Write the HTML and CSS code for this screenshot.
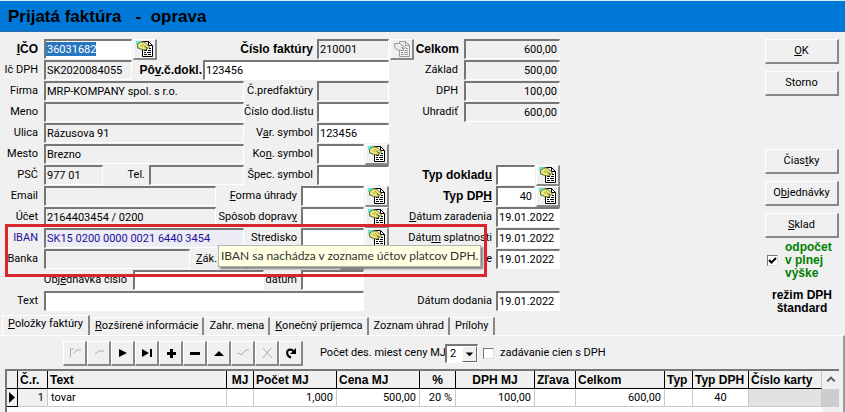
FILE: index.html
```html
<!DOCTYPE html>
<html lang="sk">
<head>
<meta charset="utf-8">
<title>Prijatá faktúra - oprava</title>
<link rel="stylesheet" href="styles.css">
</head>
<body>
<svg class="defs" aria-hidden="true">
  <symbol id="list" viewBox="0 0 18 18">
    <path d="M0 1h6v4H4v4H1V5H0z" fill="#5fe8e0"/>
    <path d="M6.500 1.500h6l4 4v11h-10z" fill="#fff" stroke="#000"/>
    <path d="M12.500 1.500v4h4" fill="none" stroke="#000"/>
    <path d="M8 10.500h3m1 0h3M8 12.500h2m1 0h4M8 14.500h3m1 0h3M13 8.500h2" stroke="#000"/>
    <path d="M1.500 4.500l3-2.500h4l5 5-1.500 1.500-3-2 2 3-2 .5-3.500-.5-4-2z" fill="#e6e67c" stroke="#66662c"/>
    <path d="M5 5l2 2M7 4l3 4" stroke="#a8a83c"/>
  </symbol>
  <symbol id="list-off" viewBox="0 0 18 18">
    <path d="M6.500 1.500h6l4 4v11h-10zM12.500 1.500v4h4" fill="none" stroke="#999"/>
    <path d="M8 10.500h3m1 0h3M8 12.500h2m1 0h4M8 14.500h3m1 0h3M13 8.500h2" stroke="#999"/>
    <path d="M1.500 3.500h5l6 4-1 1.500-3-2 2 3-2 .5-3.500-.5-3-2z" fill="#eee" stroke="#999"/>
  </symbol>
</svg>

<header class="titlebar"><h1>Prijatá faktúra&nbsp;&nbsp; -&nbsp; oprava</h1></header>

<main>
<form class="form">
  <div class="partner">
    <div class="row">
      <label class="lead strong" for="ico"><u>I</u>ČO</label><input class="w88 picked" id="ico" value="36031682">
      <button type="button" class="pick" aria-label="IČO"><svg><use href="#list"/></svg></button>
      <label class="grow strong" for="cislo">Číslo faktúry</label><input class="w72" id="cislo" value="210001" readonly>
    </div>
    <div class="row">
      <label class="lead" for="icdph">Ič DPH</label><input class="w88" id="icdph" value="SK2020084055" readonly>
      <label class="grow strong tight" for="povodne">Pô<u>v</u>.č.dokl.</label><input class="w186" id="povodne" value="123456">
    </div>
    <div class="row">
      <label class="lead" for="firma">Firma</label><input class="w200" id="firma" value="MRP-KOMPANY spol. s r.o." readonly>
      <label class="grow" for="pred">Č.predfaktúry</label><input class="w72" id="pred" readonly>
    </div>
    <div class="row">
      <label class="lead" for="meno">Meno</label><input class="w200" id="meno" readonly>
      <label class="grow" for="dodlist">Číslo dod.listu</label><input class="w72" id="dodlist">
    </div>
    <div class="row">
      <label class="lead" for="ulica">Ulica</label><input class="w200" id="ulica" value="Rázusova 91" readonly>
      <label class="grow" for="vs">V<u>a</u>r. symbol</label><input class="w72" id="vs" value="123456">
    </div>
    <div class="row">
      <label class="lead" for="mesto">Mesto</label><input class="w200" id="mesto" value="Brezno" readonly>
      <label class="grow" for="ks">Ko<u>n</u>. symbol</label><input class="w47" id="ks">
      <button type="button" class="pick" aria-label="Kon. symbol"><svg><use href="#list"/></svg></button>
    </div>
    <div class="row">
      <label class="lead" for="psc">PSČ</label><input class="w59" id="psc" value="977 01" readonly>
      <label class="tel" for="tel">Tel.</label><input class="w95" id="tel" readonly>
      <label class="grow" for="ss">Špec. symbol</label><input class="w72" id="ss">
    </div>
    <div class="row">
      <label class="lead" for="email">Email</label><input class="w172" id="email" readonly>
      <label class="grow" for="uhrada"><u>F</u>orma úhrady</label><input class="w63" id="uhrada">
      <button type="button" class="pick" aria-label="Forma úhrady"><svg><use href="#list"/></svg></button>
    </div>
    <div class="row">
      <label class="lead" for="ucet">Účet</label><input class="w172" id="ucet" value="2164403454 / 0200" readonly>
      <label class="grow" for="doprava">Spôsob doprav<u>y</u></label><input class="w63" id="doprava">
      <button type="button" class="pick" aria-label="Spôsob dopravy"><svg><use href="#list"/></svg></button>
    </div>
    <div class="row">
      <label class="lead blue" for="iban">IBAN</label><input class="w200 blue iban" id="iban" value="SK15 0200 0000 0021 6440 3454" readonly>
      <label class="grow" for="stredisko">Stredisko</label><input class="w63" id="stredisko">
      <button type="button" class="pick" aria-label="Stredisko"><svg><use href="#list"/></svg></button>
    </div>
    <div class="row short">
      <label class="lead" for="banka">Banka</label><input class="w146" id="banka" readonly>
      <label class="job" for="zakazka"><u>Z</u>ák.</label><input class="fill" id="zakazka">
      <button type="button" class="pick" aria-label="Zák."><svg><use href="#list"/></svg></button>
    </div>
    <div class="row short">
      <label class="order" for="objednavka">Obj<u>e</u>dnávka číslo</label><input class="w131" id="objednavka">
      <label class="grow" for="datum">dátum</label><input class="w63" id="datum">
    </div>
    <div class="row short">
      <label class="lead" for="text">Text</label><input class="fill" id="text">
    </div>
    <div class="highlight"></div>
    <div class="tooltip" role="tooltip">IBAN sa nachádza v zozname účtov platcov DPH.</div>
  </div>

  <div class="totals">
    <div class="row">
      <button type="button" class="pick" aria-label="Číslo faktúry" disabled><svg><use href="#list-off"/></svg></button>
      <label class="grow sum strong" for="celkom">Celkom</label><input class="w96 num" id="celkom" value="600,00" readonly>
    </div>
    <div class="row"><label class="grow sum" for="zaklad">Základ</label><input class="w96 num" id="zaklad" value="500,00" readonly></div>
    <div class="row"><label class="grow sum" for="dph">DPH</label><input class="w96 num" id="dph" value="100,00" readonly></div>
    <div class="row"><label class="grow sum" for="uhradit">Uhradiť</label><input class="w96 num" id="uhradit" value="600,00" readonly></div>
    <div class="row"></div>
    <div class="row"></div>
    <div class="row">
      <label class="grow strong" for="typdok">Typ doklad<u>u</u></label><input class="w39" id="typdok">
      <button type="button" class="pick" aria-label="Typ dokladu"><svg><use href="#list"/></svg></button>
    </div>
    <div class="row">
      <label class="grow strong" for="typdph">Typ DP<u>H</u></label><input class="w39 num" id="typdph" value="40">
      <button type="button" class="pick" aria-label="Typ DPH"><svg><use href="#list"/></svg></button>
    </div>
    <div class="row"><label class="grow" for="d1"><u>D</u>átum zaradenia</label><input class="w64" id="d1" value="19.01.2022"></div>
    <div class="row"><label class="grow" for="d2">Dátu<u>m</u> splatnosti</label><input class="w64" id="d2" value="19.01.2022"></div>
    <div class="row"><label class="grow" for="d3">e</label><input class="w64" id="d3" value="19.01.2022"></div>
    <div class="row"></div>
    <div class="row"><label class="grow" for="d4">Dátum dodania</label><input class="w64" id="d4" value="19.01.2022"></div>
  </div>

  <div class="actions">
    <button type="button" class="action"><span><u>O</u>K</span></button>
    <button type="button" class="action">Storno</button>
    <button type="button" class="action apart"><span>Čias<u>t</u>ky</span></button>
    <button type="button" class="action"><span>O<u>b</u>jednávky</span></button>
    <button type="button" class="action"><span><u>S</u>klad</span></button>
    <label class="deduct"><input type="checkbox" class="check" checked><span>odpočet<br>v plnej<br>výške</span></label>
    <p class="mode">režim DPH<br>štandard</p>
  </div>
</form>

<nav class="tabs">
  <button type="button" class="tab active"><span><u>P</u>oložky faktúry</span></button>
  <button type="button" class="tab"><span><u>R</u>ozšírené informácie</span></button>
  <button type="button" class="tab">Zahr. mena</button>
  <button type="button" class="tab"><span><u>K</u>onečný príjemca</span></button>
  <button type="button" class="tab">Zoznam úhrad</button>
  <button type="button" class="tab">Prílohy</button>
</nav>

<section class="panel">
  <div class="toolbar">
    <div class="navigator">
      <button type="button" aria-label="Prvý" disabled><svg viewBox="0 0 16 16"><path d="M3.500 12V4h3M7 8l3-3h4" fill="none" stroke="#aaa"/></svg></button>
      <button type="button" aria-label="Predchádzajúci" disabled><svg viewBox="0 0 16 16"><path d="M4 9l4-3h5" fill="none" stroke="#aaa"/></svg></button>
      <button type="button" aria-label="Nasledujúci"><svg viewBox="0 0 16 16"><path d="M4 4l8 4-8 4z"/></svg></button>
      <button type="button" aria-label="Posledný"><svg viewBox="0 0 16 16"><path d="M3 4l7 4-7 4zM11 4h2v8h-2z"/></svg></button>
      <button type="button" aria-label="Pridať"><svg viewBox="0 0 16 16"><path d="M7 4h3v3h3v3h-3v3H7v-3H4V7h3z"/></svg></button>
      <button type="button" aria-label="Odobrať"><svg viewBox="0 0 16 16"><path d="M3 7h10v3H3z"/></svg></button>
      <button type="button" aria-label="Upraviť"><svg viewBox="0 0 16 16"><path d="M3 11l5-5 5 5z"/></svg></button>
      <button type="button" aria-label="Potvrdiť" disabled><svg viewBox="0 0 16 16"><path d="M2 9l2-1 2 2 5-5h3" fill="none" stroke="#aaa"/></svg></button>
      <button type="button" aria-label="Zrušiť" disabled><svg viewBox="0 0 16 16"><path d="M4 3l9 10M12 3L4 13" fill="none" stroke="#aaa"/></svg></button>
      <button type="button" aria-label="Obnoviť"><svg viewBox="0 0 16 16"><path d="M8 12.500C3 11 3 5 7 4.500c2 0 3.500 1 4 3" fill="none" stroke="#000" stroke-width="2"/><path d="M13 3v6H7z"/></svg></button>
    </div>
    <label class="places" for="places">Počet des. miest ceny MJ</label>
    <span class="combo">
      <select id="places"><option>2</option></select>
      <svg class="arrow" viewBox="0 0 14 15"><path d="M3 6h8l-4 4z"/></svg>
    </span>
    <label class="withvat"><input type="checkbox" class="check">zadávanie cien s DPH</label>
  </div>

  <div class="grid">
    <table>
      <colgroup><col class="c12"><col class="c30"><col><col class="c27"><col class="c83"><col class="c83"><col class="c36"><col class="c79"><col class="c41"><col class="c89"><col class="c28"><col class="c56"><col class="c73"></colgroup>
      <thead>
        <tr><th></th><th>Č.r.</th><th>Text</th><th class="mid">MJ</th><th>Počet MJ</th><th>Cena MJ</th><th class="mid">%</th><th class="mid">DPH MJ</th><th>Zľava</th><th>Celkom</th><th>Typ</th><th>Typ DPH</th><th>Číslo karty</th></tr>
      </thead>
      <tbody>
        <tr><td class="marker"><svg viewBox="0 0 9 15"><path d="M1 2l6 5.500L1 13z"/></svg></td><td class="rownum">1</td><td>tovar</td><td></td><td class="right">1,000</td><td class="right">500,00</td><td class="right">20 %</td><td class="right">100,00</td><td></td><td class="right">600,00</td><td></td><td class="mid">40</td><td class="off"></td></tr>
      </tbody>
    </table>
    <div class="scroll">
      <svg viewBox="0 0 17 19"><path d="M5 11l4-4 4 4" fill="none" stroke="#555" stroke-width="2"/></svg>
      <div class="thumb"></div>
    </div>
  </div>
</section>
</main>
</body>
</html>
```

FILE: styles.css
```css
* { box-sizing: border-box; }

body {
  margin: 0;
  background: #f0f0f0;
  color: #000;
  font: 11px/16px Roboto, "Liberation Sans", sans-serif;
  overflow: hidden;
}

input, button, select { font: inherit; color: inherit; margin: 0; border-radius: 0; }
u { text-underline-offset: 1px; }
.defs { position: absolute; width: 0; height: 0; }

.titlebar {
  height: 32px;
  padding-left: 8px;
  border-top: 1px solid #d4eefa;
  border-bottom: 1px solid #2a6da8;
  background: #0078d7;
}
.titlebar h1 { margin: 0; font: bold 17px/31px "Liberation Sans", sans-serif; }

.form { display: flex; padding: 7px 6px 0 0; }
.partner { position: relative; flex: 0 0 389px; min-width: 0; }
.totals { flex: 0 0 171px; }
.row { display: flex; align-items: flex-start; height: 21px; }
.short { padding-right: 25px; }
.row label { padding: 2px 4px 0 0; text-align: right; white-space: nowrap; }
.row .lead { flex: 0 0 44px; padding-right: 6px; }
.row .grow { flex: 1 1 0; min-width: 0; }
.row .tight { padding-right: 1px; }
.row .sum { padding-right: 6px; }
.row .tel { flex: 0 0 46px; }
.row .job { flex: 0 0 56px; padding-left: 6px; text-align: left; }
.row .order { flex: 0 0 133px; padding-right: 6px; }
.strong, .deduct, .mode, th { font: bold 12px/16px "Liberation Sans", sans-serif; }
.row .sum.strong { padding-right: 5px; }

.row input {
  height: 20px;
  padding: 0 2px 0 1px;
  border: 2px solid #777;
  border-right: 1px solid #fff;
  border-bottom: 1px solid #fff;
  background: #fff;
  outline: 0;
}
.row input[readonly] { background: #f0f0f0; }
.row input.iban { background: #ececf4; }
.row .blue { color: #1a109c; }
.row .num { text-align: right; }
.row input.picked {
  background: #fff linear-gradient(#2676c0, #2676c0) 0 1px / 50px 14px no-repeat;
  color: #fff;
}
.w39 { width: 39px; }
.w47 { width: 47px; }
.w59 { width: 59px; }
.w63 { width: 63px; }
.w64 { width: 64px; }
.w72 { width: 72px; }
.w88 { width: 88px; }
.w95 { width: 95px; }
.w96 { width: 96px; }
.w131 { width: 131px; }
.w146 { width: 146px; }
.w172 { width: 172px; }
.w186 { width: 186px; }
.w200 { width: 200px; }
.fill { flex: 1; min-width: 0; }

.pick {
  flex: none;
  width: 24px;
  height: 21px;
  margin-left: 1px;
  padding: 0 2px;
  border: 1px solid #fff;
  border-right: 2px solid #888;
  border-bottom: 2px solid #888;
  background: #f0f0f0;
}
.pick svg { display: block; width: 18px; height: 18px; }

.highlight {
  position: absolute;
  top: 185px;
  left: 5px;
  width: 482px;
  height: 53px;
  border: 3px solid #d8262c;
  pointer-events: none;
}
.tooltip {
  position: absolute;
  top: 206px;
  left: 218px;
  padding: 1px 2px;
  border: 1px solid #b4b4b4;
  background: #ffffe1;
  box-shadow: 2px 2px 2px #808080;
  color: #333;
  font: 12px/18px Lato, sans-serif;
  white-space: nowrap;
}

.actions { width: 74px; margin-left: auto; }
.action {
  display: block;
  width: 100%;
  height: 25px;
  margin-bottom: 7px;
  padding: 0;
  border: 1px solid #fff;
  border-right: 2px solid #888;
  border-bottom: 2px solid #888;
  background: #f0f0f0;
}
.apart { margin-top: 53px; }
.deduct {
  display: flex;
  align-items: center;
  gap: 7px;
  margin: -4px 0 0 2px;
  color: #008000;
  line-height: 13px;
}
.mode { margin: 9px 0 0; text-align: center; line-height: 13px; }

.check {
  appearance: none;
  flex: none;
  width: 11px;
  height: 11px;
  border: 1px solid #777;
  border-right-color: #ddd;
  border-bottom-color: #ddd;
  background: #fff;
}
.check:checked {
  background: #fff url("data:image/svg+xml,%3Csvg xmlns='http://www.w3.org/2000/svg' viewBox='0 0 9 9'%3E%3Cpath d='M1 4l2.500 2.500L8 2' fill='none' stroke='black' stroke-width='2'/%3E%3C/svg%3E");
}

.tabs { display: flex; align-items: flex-end; height: 20px; padding-left: 2px; }
.tab {
  height: 18px;
  padding: 0 4px 1px 5px;
  border: 0;
  border-top: 1px solid #fff;
  border-right: 2px solid #888;
  background: none;
}
.tab.active { height: 20px; padding: 0 5px 3px; border-left: 1px solid #fff; }

.panel { padding: 4px 4px 0 5px; border-top: 1px solid #fff; border-right: 2px solid #999; }
.toolbar { display: flex; align-items: center; height: 26px; padding-left: 58px; }
.navigator { display: flex; }
.navigator button {
  width: 24px;
  height: 25px;
  padding: 0 3px;
  border: 1px solid #fff;
  border-right: 2px solid #888;
  border-bottom: 2px solid #888;
  background: #f0f0f0;
}
.navigator svg { display: block; width: 16px; height: 16px; }
.places { width: 122px; margin: 0 3px 0 17px; white-space: nowrap; }
.combo {
  position: relative;
  width: 33px;
  height: 19px;
  border: 2px solid #777;
  border-right: 1px solid #fff;
  border-bottom: 1px solid #fff;
  background: #fff;
}
.combo select { display: block; appearance: none; width: 100%; height: 16px; padding: 0 3px; border: 0; background: none; }
.arrow {
  position: absolute;
  top: 0;
  right: 0;
  width: 15px;
  height: 16px;
  border: 1px solid #fff;
  border-right-color: #666;
  border-bottom-color: #666;
  background: #f0f0f0;
  pointer-events: none;
}
.withvat { display: flex; align-items: center; gap: 6px; margin-left: 5px; }

.grid { display: flex; height: 60px; margin-top: 3px; border: 2px solid #777; border-right: 0; background: #fff; }
table { flex: 1; width: 0; align-self: flex-start; table-layout: fixed; border-collapse: separate; border-spacing: 0; }
th, td { height: 18px; padding: 0 3px; overflow: hidden; white-space: nowrap; text-align: left; line-height: 16px; }
th { padding: 0 2px; border-right: 1px solid #000; border-bottom: 1px solid #000; background: #f0f0f0; }
td { border-right: 1px solid #c8c8c8; border-bottom: 1px solid #c8c8c8; }
th:last-child { border-right-color: #c8c8c8; }
.mid { text-align: center; }
.right { text-align: right; }
.off { background: #e2e2e2; }
.rownum { background: #f0f0f0; text-align: right; }
.marker { padding: 0 1px; border-color: #000; background: #f0f0f0; }
.marker svg { display: block; width: 9px; height: 15px; }
.c12 { width: 11px; }
.c27 { width: 27px; }
.c28 { width: 28px; }
.c30 { width: 30px; }
.c36 { width: 36px; }
.c41 { width: 41px; }
.c56 { width: 56px; }
.c73 { width: 73px; }
.c79 { width: 79px; }
.c83 { width: 83px; }
.c89 { width: 89px; }
.scroll { flex: 0 0 17px; background: #f0f0f0; }
.scroll svg { display: block; width: 17px; height: 18px; }
.thumb { height: 18px; background: #cdcdcd; }
```
